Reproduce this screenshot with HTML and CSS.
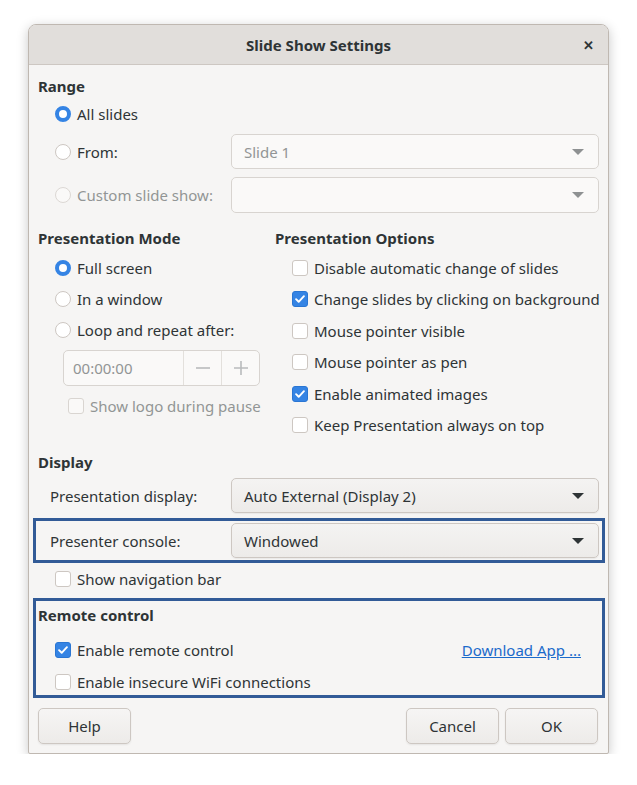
FILE: index.html
```html
<!DOCTYPE html>
<html lang="en">
<head>
    <meta charset="UTF-8">
    <title>Slide Show Settings</title>
    <link rel="stylesheet" href="styles.css">
</head>
<body>
<div class="dialog">
    <header class="titlebar">
        <span class="title">Slide Show Settings</span>
        <span class="close">&#x2715;</span>
    </header>

    <div class="content">
        <section class="range">
            <h2 class="heading">Range</h2>
            <label class="opt all-row"><span class="radio on"></span>All slides</label>
            <div class="range-row from-row">
                <label class="opt"><span class="radio"></span>From:</label>
                <div class="combo off">Slide 1<svg class="arrow" viewBox="0 0 12 6"><polygon points="0,0 12,0 6,6"/></svg></div>
            </div>
            <div class="range-row custom-row">
                <label class="opt dim"><span class="radio dis"></span>Custom slide show:</label>
                <div class="combo off"><svg class="arrow" viewBox="0 0 12 6"><polygon points="0,0 12,0 6,6"/></svg></div>
            </div>
        </section>

        <div class="columns">
            <section class="mode">
                <h2 class="heading">Presentation Mode</h2>
                <label class="opt row"><span class="radio on"></span>Full screen</label>
                <label class="opt row"><span class="radio"></span>In a window</label>
                <label class="opt row"><span class="radio"></span>Loop and repeat after:</label>
                <div class="spin">
                    <span class="spin-value">00:00:00</span>
                    <span class="spin-btn"><svg viewBox="0 0 16 16"><path d="M1 8h14"/></svg></span>
                    <span class="spin-btn"><svg viewBox="0 0 16 16"><path d="M1 8h14M8 1v14"/></svg></span>
                </div>
                <label class="opt dim logo-row"><span class="check dis"></span>Show logo during pause</label>
            </section>
            <section class="options">
                <h2 class="heading">Presentation Options</h2>
                <label class="opt row"><span class="check"></span>Disable automatic change of slides</label>
                <label class="opt row"><span class="check on"><svg viewBox="0 0 16 16"><path d="M3.5 8.2l3 3 6-6.4"/></svg></span>Change slides by clicking on background</label>
                <label class="opt row"><span class="check"></span>Mouse pointer visible</label>
                <label class="opt row"><span class="check"></span>Mouse pointer as pen</label>
                <label class="opt row"><span class="check on"><svg viewBox="0 0 16 16"><path d="M3.5 8.2l3 3 6-6.4"/></svg></span>Enable animated images</label>
                <label class="opt row"><span class="check"></span>Keep Presentation always on top</label>
            </section>
        </div>

        <section class="display">
            <h2 class="heading">Display</h2>
            <div class="disp-row">
                <span class="disp-label">Presentation display:</span>
                <div class="combo">Auto External (Display 2)<svg class="arrow" viewBox="0 0 12 6"><polygon points="0,0 12,0 6,6"/></svg></div>
            </div>
            <div class="disp-row marked">
                <span class="disp-label">Presenter console:</span>
                <div class="combo">Windowed<svg class="arrow" viewBox="0 0 12 6"><polygon points="0,0 12,0 6,6"/></svg></div>
            </div>
            <label class="opt nav-row"><span class="check"></span>Show navigation bar</label>
        </section>

        <section class="remote marked">
            <h2 class="heading">Remote control</h2>
            <div class="remote-row first">
                <label class="opt"><span class="check on"><svg viewBox="0 0 16 16"><path d="M3.5 8.2l3 3 6-6.4"/></svg></span>Enable remote control</label>
                <a class="link" href="#">Download App ...</a>
            </div>
            <div class="remote-row">
                <label class="opt"><span class="check"></span>Enable insecure WiFi connections</label>
            </div>
        </section>
    </div>

    <footer class="buttons">
        <button class="btn">Help</button>
        <span class="spacer"></span>
        <button class="btn">Cancel</button>
        <button class="btn">OK</button>
    </footer>
</div>
</body>
</html>
```

FILE: styles.css
```css
* {
    box-sizing: border-box;
    margin: 0;
    padding: 0;
}

body {
    background: #ffffff;
    font-family: 'Noto Sans', 'Open Sans', sans-serif;
    font-size: 15px;
    color: #2e3436;
}

.dialog {
    width: 581px;
    margin: 24px 0 0 28px;
    background: #f6f5f4;
    border: 1px solid #bfb8b1;
    border-radius: 8px 8px 2px 2px;
    box-shadow: 0 3px 12px rgba(0, 0, 0, 0.22);
    overflow: hidden;
}

.titlebar {
    height: 40px;
    background: #e1dedb;
    border-bottom: 1px solid #cdc7c2;
    display: flex;
    align-items: center;
    justify-content: center;
    position: relative;
}

.title {
    font-weight: bold;
    font-size: 15px;
}

.close {
    position: absolute;
    right: 14px;
    top: 11px;
    font-size: 13px;
    font-weight: bold;
}

.content {
    padding: 0 3px 0 4px;
}

.heading {
    font-size: 15px;
    font-weight: bold;
    height: 22px;
    line-height: 22px;
    padding-left: 5px;
}

.opt {
    display: flex;
    align-items: center;
    gap: 6px;
    white-space: nowrap;
}

.dim {
    color: #929595;
}

/* radio + check */
.radio {
    width: 16px;
    height: 16px;
    border-radius: 50%;
    border: 1px solid #cdc7c2;
    background: #ffffff;
    flex: none;
}

.radio.on {
    border: 4.5px solid #3584e4;
}

.radio.dis {
    background: #faf9f8;
    border-color: #dcd8d4;
}

.check {
    width: 16px;
    height: 16px;
    border-radius: 3px;
    border: 1px solid #cdc7c2;
    background: #ffffff;
    flex: none;
    display: flex;
}

.check.on {
    background: #3584e4;
    border-color: #2a76d3;
}

.check.dis {
    background: #faf9f8;
    border-color: #d9d5d1;
}

.check svg {
    width: 14px;
    height: 14px;
    fill: none;
    stroke: #ffffff;
    stroke-width: 2.2;
    stroke-linecap: round;
    stroke-linejoin: round;
}

/* combo boxes */
.combo {
    width: 368px;
    height: 35px;
    border: 1px solid #cdc7c2;
    border-radius: 5px;
    background: linear-gradient(#f4f3f2, #edebe9);
    display: flex;
    align-items: center;
    padding: 0 14px 0 12px;
    box-shadow: 0 1px 1px rgba(0, 0, 0, 0.05);
}

.combo .arrow {
    width: 12px;
    height: 6px;
    margin-left: auto;
    fill: #2e3436;
}

.combo.off {
    background: #faf9f8;
    border-color: #d8d4d0;
    color: #929595;
    box-shadow: none;
}

.combo.off .arrow {
    fill: #8e9192;
}

/* range */
.range .heading {
    margin-top: 10px;
}

.all-row {
    height: 30px;
    margin-top: 2px;
    padding-left: 22px;
}

.range-row {
    display: flex;
    align-items: center;
    padding-left: 22px;
}

.range-row .opt {
    width: 176px;
}

.from-row {
    margin-top: 5px;
}

.custom-row {
    margin-top: 8px;
}

.custom-row .combo {
    height: 36px;
}

/* two columns */
.columns {
    display: grid;
    grid-template-columns: 242px 1fr;
    margin-top: 14px;
}

.columns .row {
    height: 31px;
}

.mode .heading {
    margin-bottom: 3px;
}

.mode .row {
    padding-left: 22px;
}

.options .heading {
    padding-left: 0;
    margin-bottom: 3px;
}

.options .row {
    height: 31.5px;
    padding-left: 17px;
}

.spin {
    margin: 5px 0 0 30px;
    width: 197px;
    height: 36px;
    border: 1px solid #d8d4d0;
    border-radius: 5px;
    background: #faf9f8;
    display: flex;
}

.spin-value {
    flex: 1;
    display: flex;
    align-items: center;
    padding-left: 9px;
    color: #929595;
}

.spin-btn {
    width: 38px;
    border-left: 1px solid #e3e0dc;
    display: flex;
    align-items: center;
    justify-content: center;
}

.spin-btn svg {
    width: 16px;
    height: 16px;
    stroke: #b9bbbc;
    stroke-width: 1.6;
}

.logo-row {
    height: 30px;
    margin: 5px 0 0 35px;
}

/* display */
.display .heading {
    margin-top: 10px;
}

.disp-row {
    display: flex;
    align-items: center;
    border: 3px solid transparent;
    padding: 2px 0 2px 14px;
}

.disp-label {
    width: 181px;
}

.marked {
    border: 3px solid #325b97;
}

.nav-row {
    height: 32px;
    padding-left: 22px;
}

/* remote */
.remote {
    margin-top: 3px;
    padding: 3px 21px 0 2px;
}

.remote .heading {
    padding-left: 0;
}

.remote-row {
    display: flex;
    align-items: center;
    justify-content: space-between;
    height: 26px;
    padding-left: 17px;
    margin-top: 6px;
}

.remote-row.first {
    margin-top: 11px;
}

.link {
    color: #1b6acb;
    text-decoration: underline;
}

/* footer */
.buttons {
    display: flex;
    gap: 6px;
    margin-top: 10px;
    padding: 0 10px 9px 9px;
}

.spacer {
    flex: 1;
}

.btn {
    width: 93px;
    height: 36px;
    font: inherit;
    color: #2e3436;
    border: 1px solid #cdc7c2;
    border-radius: 5px;
    background: linear-gradient(#f6f5f4, #edebe9);
    box-shadow: 0 1px 2px rgba(0, 0, 0, 0.07);
}
```
